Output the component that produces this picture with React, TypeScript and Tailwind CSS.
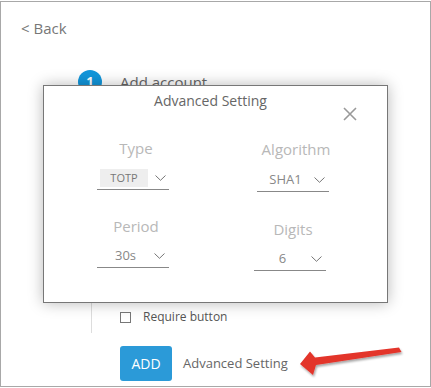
const font = { fontFamily: '"Open Sans", "Noto Sans", sans-serif' }

function Chevron() {
  return (
    <svg width="11" height="6" viewBox="0 0 11 6" className="shrink-0">
      <path d="M0.5 0.5 L5.5 5.3 L10.5 0.5" fill="none" stroke="#666" strokeWidth="0.9" />
    </svg>
  )
}

function Field({ label, value, boxed, gap = 'mt-[9px]' }: { label: string; value: string; boxed?: boolean; gap?: string }) {
  return (
    <div className="flex flex-col items-center w-[72px]">
      <div className="ml-[6px] text-[15px] leading-[20px] text-[#b8b8b8] whitespace-nowrap">{label}</div>
      <div className={`${gap} flex h-[23px] w-[72px] items-center border-b border-[#888]`}>
        {boxed ? (
          <div className="ml-[3px] mr-[7px] flex h-[18px] w-[48px] items-center justify-center bg-[#eeeeee] text-[11px] text-[#777]">
            {value}
          </div>
        ) : (
          <div className="w-[57px] text-center text-[13px] text-[#888]">{value}</div>
        )}
        <Chevron />
      </div>
    </div>
  )
}

export default function App() {
  return (
    <div className="w-[431px] h-[388px] bg-white" style={font}>
      <div className="relative mt-[1px] flex h-[386px] w-[431px] flex-col overflow-hidden border border-[#a8a8a8] bg-white">
        {/* Back */}
        <div className="pl-[20px] pt-[16px] text-[15px] leading-[20px] text-[#777]">&lt; Back</div>

        {/* Step 1 */}
        <div className="ml-[77px] mt-[32px] flex items-center">
          <div className="flex h-6 w-6 items-center justify-center rounded-full bg-[#1296db] text-[13px] font-bold text-white">1</div>
          <div className="ml-[18px] text-[15px] leading-[20px] text-[#666]">Add account</div>
        </div>

        {/* connector + checkbox */}
        <div className="ml-[90px] flex h-[239px] flex-col justify-end border-l border-[#dddddd] pb-[9px]">
          <div className="flex h-[14px] items-center pl-[28px]">
            <div className="h-[11px] w-[11px] border border-[#777] bg-white" />
            <span className="ml-[12px] text-[12px] text-[#555]">Require button</span>
          </div>
        </div>

        {/* Add row */}
        <div className="ml-[119px] mt-[13px] flex items-center">
          <button className="flex h-[35px] w-[52px] items-center justify-center rounded-[3px] bg-[#2b9ad8] text-[14px] text-white">ADD</button>
          <span className="ml-[11px] text-[13px] text-[#666]">Advanced Setting</span>
        </div>

        {/* Dialog */}
        <div className="absolute left-[42px] top-[83px] flex h-[218px] w-[345px] flex-col border border-[#777] bg-white shadow-[0_0_14px_rgba(0,0,0,0.28)]">
          <div className="pr-[10px] pt-[5px] text-center text-[14px] leading-[20px] text-[#666]">Advanced Setting</div>
          <svg width="14" height="14" viewBox="0 0 14 14" className="absolute right-[30px] top-[21px]">
            <path d="M1 1 L13 13 M13 1 L1 13" stroke="#999" strokeWidth="1.6" />
          </svg>
          <div className="mt-[27px] grid grid-cols-[72px_72px] gap-x-[88px] pl-[53px]">
            <div className="flex flex-col">
              <Field label="Type" value="TOTP" boxed />
              <div className="mt-[26px]">
                <Field label="Period" value="30s" />
              </div>
            </div>
            <div className="flex flex-col pt-[1px]">
              <Field label="Algorithm" value="SHA1" gap="mt-[10px]" />
              <div className="ml-[-3px] mt-[27px]">
                <Field label="Digits" value="6" />
              </div>
            </div>
          </div>
        </div>

        {/* red arrow annotation */}
        <svg width="431" height="388" className="pointer-events-none absolute left-[-1px] top-[-2px]">
          <defs>
            <filter id="sh" x="-10%" y="-30%" width="130%" height="180%">
              <feDropShadow dx="1" dy="2" stdDeviation="1.2" floodColor="#000" floodOpacity="0.35" />
            </filter>
          </defs>
          <polygon points="300,364 310,351.5 315,357.5 399,347.5 401.5,352 316,365 313,375" fill="#e3342b" filter="url(#sh)" />
        </svg>
      </div>
    </div>
  )
}
